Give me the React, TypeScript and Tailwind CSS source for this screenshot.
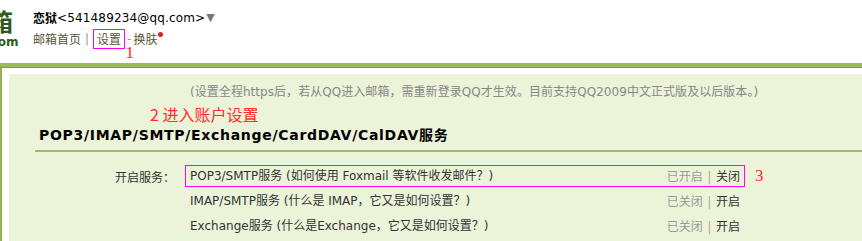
import React from "react";

const latin = "font-['DejaVu_Sans','Noto_Sans_CJK_SC',sans-serif]";

export default function App() {
  const rows = [
    { name: "POP3/SMTP服务 (如何使用 Foxmail 等软件收发邮件？)", status: "已开启", action: "关闭", boxed: true },
    { name: "IMAP/SMTP服务 (什么是 IMAP，它又是如何设置？)", status: "已关闭", action: "开启", boxed: false },
    { name: "Exchange服务 (什么是Exchange，它又是如何设置？)", status: "已关闭", action: "开启", boxed: false },
  ];
  return (
    <div className={`w-[862px] h-[241px] overflow-hidden bg-white ${latin}`}>
      {/* header */}
      <div className="h-[63px] flex">
        <div className="w-[33px] flex flex-col pt-[8px] overflow-hidden">
          <div className="ml-[-11px] text-[24px] leading-[26px] font-bold text-[#2e5a1c] font-['Noto_Sans_CJK_SC',sans-serif]">箱</div>
          <div className="ml-[-14px] text-[12px] leading-[12px] font-bold text-[#2e5a1c] mt-[2px]">.com</div>
        </div>
        <div className="flex flex-col pt-[9px]">
          <div className="flex items-center text-[12px] leading-[18px] text-black">
            <span className="font-bold font-['Noto_Sans_CJK_SC',sans-serif]">恋狱</span>
            <span className="tracking-[0.15px]">&lt;541489234@qq.com&gt;</span>
            <span className="text-[#777] text-[11px] ml-[1px]">▼</span>
          </div>
          <div className="flex items-start text-[12px] leading-[18px] text-[#56563a] mt-[2px]">
            <span className="font-['Noto_Sans_CJK_SC',sans-serif] mt-[1px]">邮箱首页</span>
            <span className="text-[#999] mx-[4px] mt-[1px]">|</span>
            <span className="border border-[#ff00ff] px-[3px] h-[20px] leading-[18px] font-['Noto_Sans_CJK_SC',sans-serif]">设置</span>
            <span className="text-[#999] mx-[2px] mt-[1px]">-</span>
            <span className="font-['Noto_Sans_CJK_SC',sans-serif] mt-[1px]">换肤</span>
            <span className="w-[5px] h-[5px] rounded-full bg-[#d61f1f] mt-[3px] ml-[1px]" />
            <span className="text-[#ff2d2d] text-[17px] leading-[18px] font-['Liberation_Serif',serif] ml-[-38px] mt-[15px]">1</span>
          </div>
        </div>
      </div>
      {/* green bar */}
      <div className="h-[5px] bg-[#9bbb59] border-b border-[#7f9f45]" />
      <div className="flex">
        <div className="w-[2px] bg-[#93b354] h-[178px]" />
        <div className="w-[7px]" />
        <div className="flex-1 mt-[6px] bg-[#ebf3d9] h-[172px] flex flex-col">
          <div className="pl-[181px] pt-[10px] text-[12px] leading-[16px] text-[#888] tracking-[0.05px]">
            (设置全程https后，若从QQ进入邮箱，需重新登录QQ才生效。目前支持QQ2009中文正式版及以后版本。)
          </div>
          <div className="pl-[141px] mt-[3px] text-[16px] leading-[22px] text-[#ff2d2d] font-['Noto_Sans_CJK_SC',sans-serif]">
            2 进入账户设置
          </div>
          <div className="ml-[26px] mt-[1px] pl-[4px] text-[14px] leading-[18px] font-bold text-black tracking-[0.7px] pb-[6px] border-b-[2px] border-[#a3b873]">
            POP3/IMAP/SMTP/Exchange/CardDAV/CalDAV服务
          </div>
          <div className="flex mt-[13px]">
            <div className="w-[173px] shrink-0 pl-[106px] whitespace-nowrap text-[12px] leading-[22px] text-[#333] font-['Noto_Sans_CJK_SC',sans-serif] pt-[1px]">
              开启服务：
            </div>
            <div className="flex flex-col gap-[3px] ml-[3px]">
              {rows.map((r) => (
                <div key={r.name} className="flex items-center">
                  <div className={`w-[560px] h-[22px] flex items-center justify-between pl-[4px] pr-[4px] border ${r.boxed ? "border-[#ff00ff]" : "border-transparent"} text-[12px] leading-[16px] text-[#333]`}>
                    <span>{r.name}</span>
                    <span className="flex items-center font-['Noto_Sans_CJK_SC',sans-serif]">
                      <span className="text-[#999]">{r.status}</span>
                      <span className="text-[#999] mx-[5px]">|</span>
                      <span className="text-[#333]">{r.action}</span>
                    </span>
                  </div>
                  {r.boxed && <span className="ml-[10px] text-[17px] leading-[18px] text-[#ff2d2d] font-['Liberation_Serif',serif]">3</span>}
                </div>
              ))}
            </div>
          </div>
        </div>
      </div>
    </div>
  );
}
